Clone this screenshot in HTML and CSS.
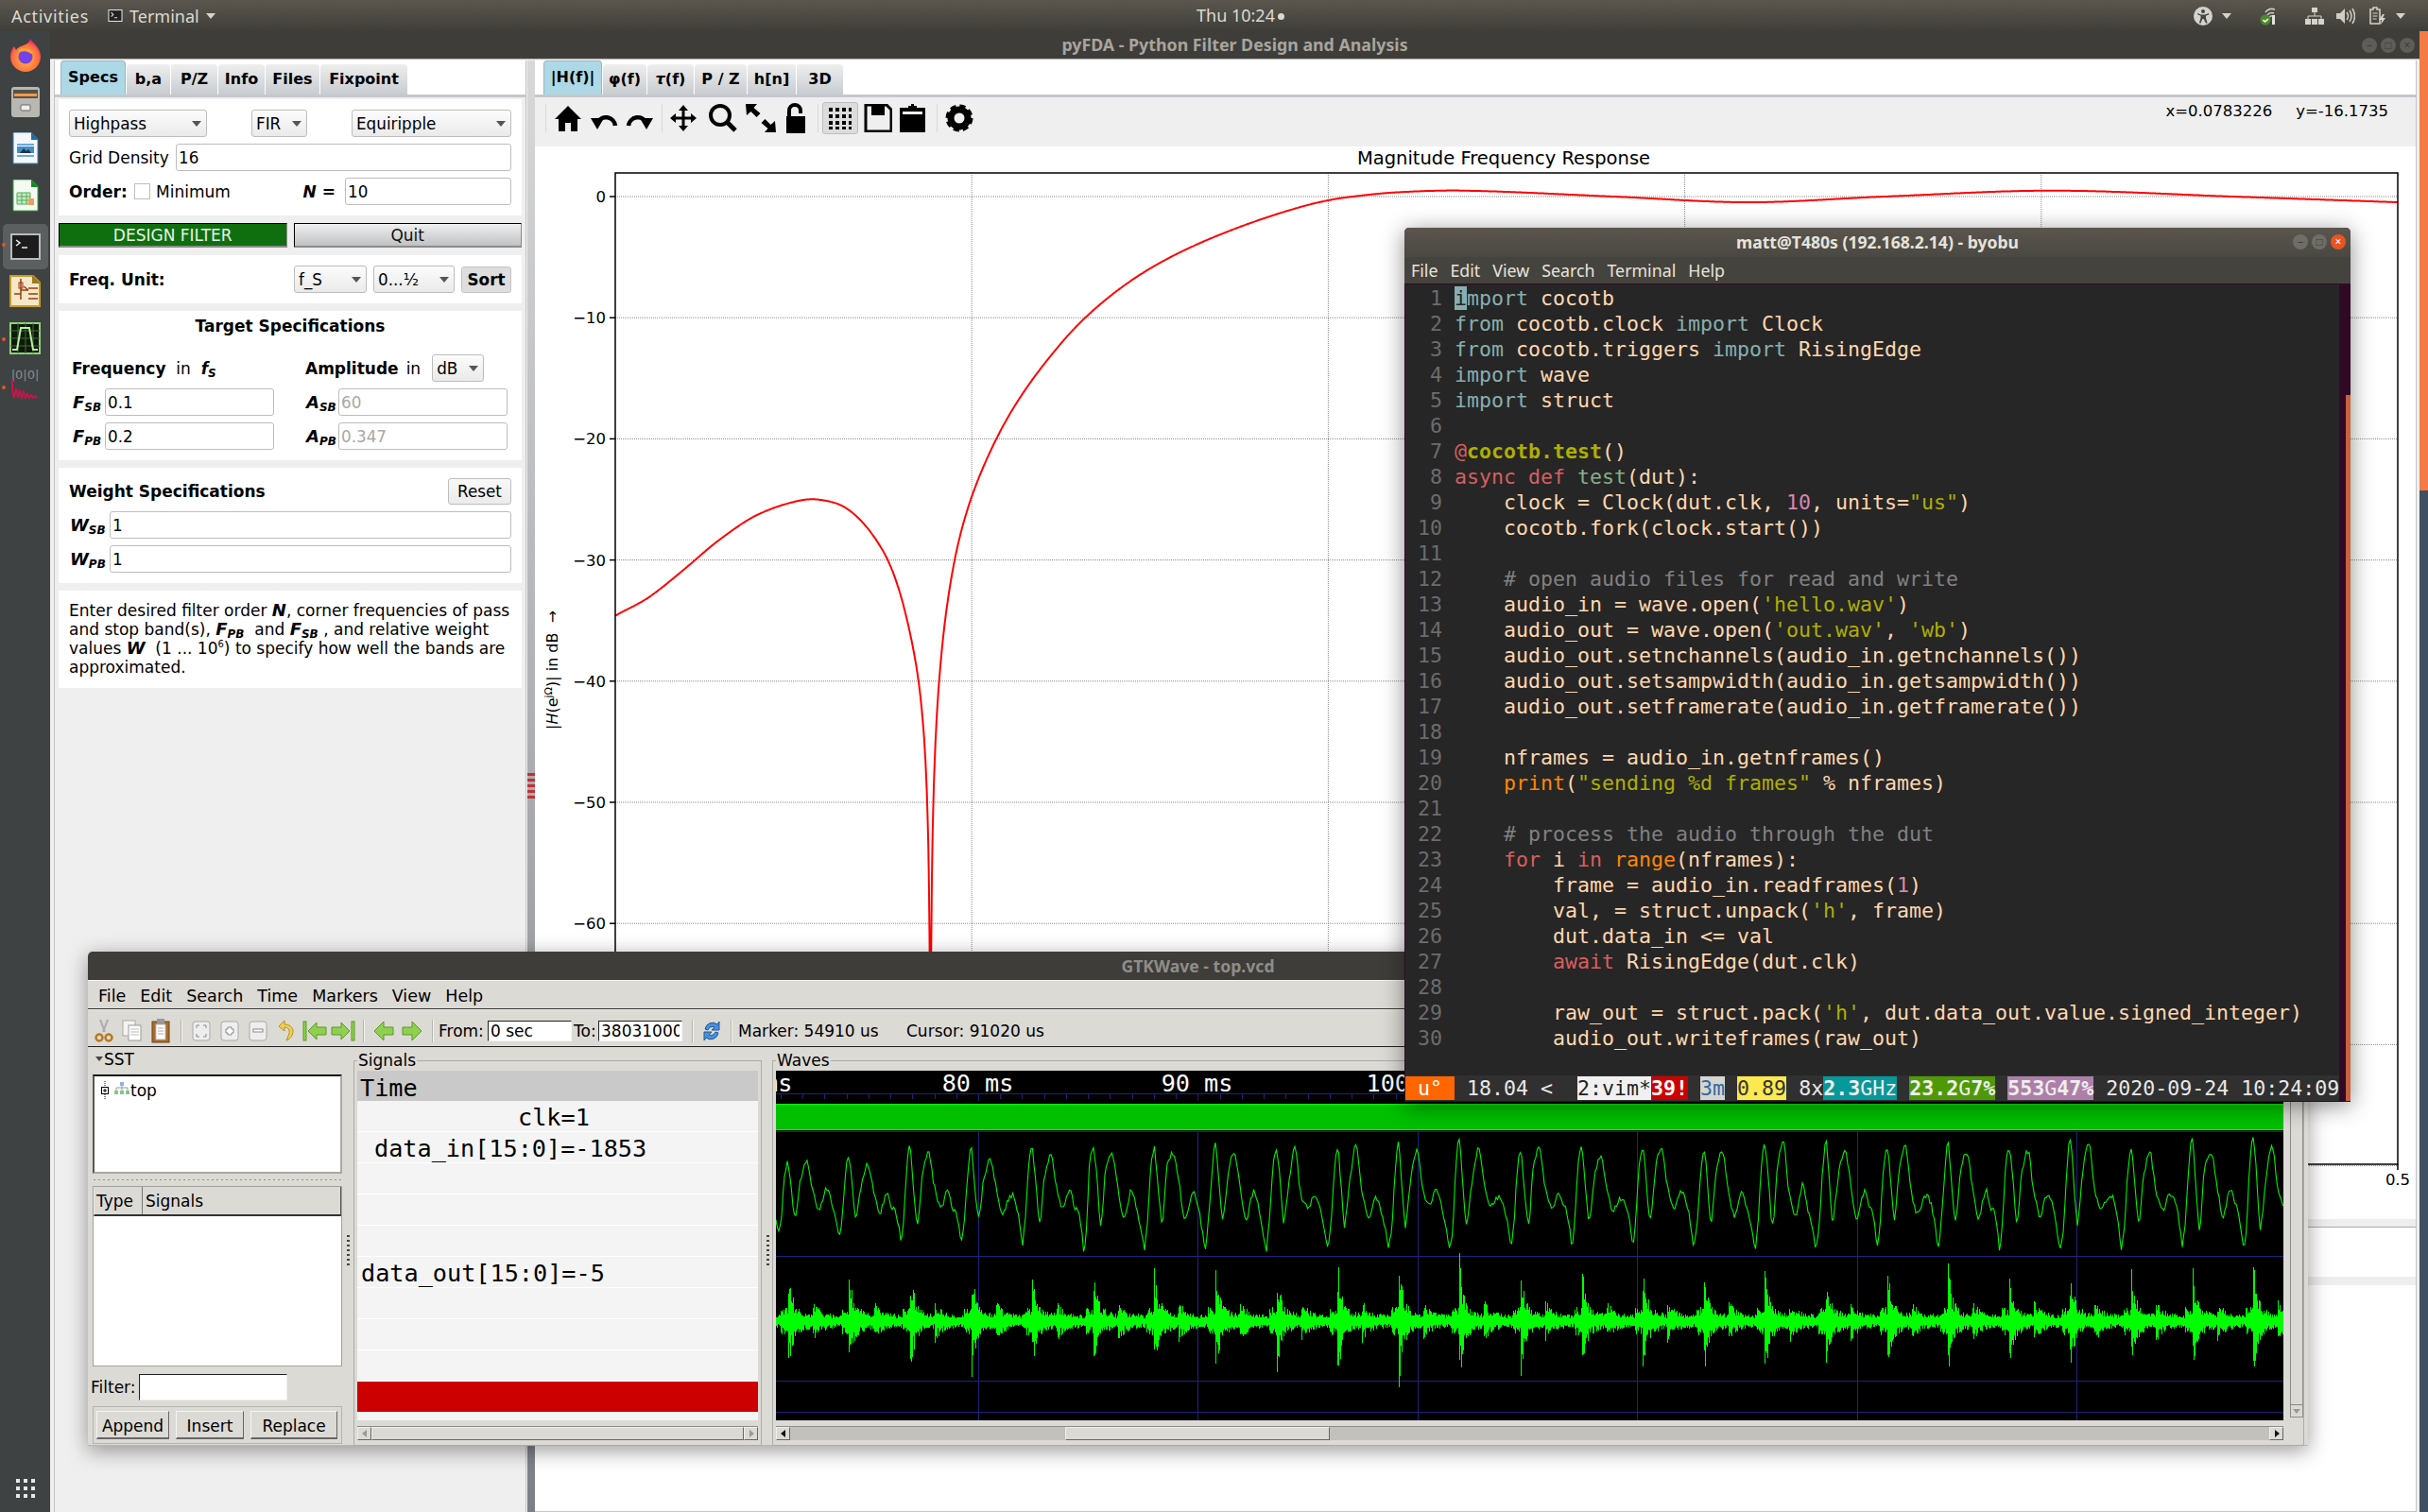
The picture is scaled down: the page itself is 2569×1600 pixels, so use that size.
FILE: index.html
```html
<!DOCTYPE html>
<html lang="en">
<head>
  <meta charset="UTF-8">
  <title>pyFDA desktop</title>
  <link rel="stylesheet" href="styles.css">
</head>
<body>
<div class="screen">
  <header class="topbar">
    <span class="tb-item tb-act">Activities</span>
    <span class="tb-item tb-app">
      <svg width="16" height="13" viewBox="0 0 14 12"><rect x="0.5" y="0.5" width="13" height="11" fill="#222" stroke="#ddd"/><path d="M3 3l2 2-2 2M6 8h3" stroke="#ddd" fill="none"/></svg>
      Terminal <i class="caret caret-light"></i>
    </span>
    <span class="tb-clock">Thu 10:24<b class="tb-dot"></b></span>
    <div class="tb-tray">
      <svg class="tray-a11y" width="20" height="20" viewBox="0 0 20 20"><circle cx="10" cy="10" r="10" fill="#d6d3cc"/><circle cx="10" cy="5" r="2" fill="#444"/><path d="M4 7l4 1.5h4L16 7l.4 1.3-3.4 1.5v2.4l1.6 5-1.4.5L10.6 13h-1.2l-2.1 4.7-1.4-.5 1.6-5V9.800L4.100 8.300z" fill="#444"/></svg>
      <i class="caret caret-light tray-c1"></i>
      <svg class="tray-wifi" width="18" height="20" viewBox="0 0 18 20"><path d="M6 6a9 9 0 0 1 10-3M8 9a6 6 0 0 1 7-2M10 12a3 3 0 0 1 4-2" stroke="#cfccc4" stroke-width="1.600" fill="none"/><rect x="13" y="9" width="3" height="10" fill="#e4e2dc"/><circle cx="6" cy="14" r="5.500" fill="#4e8a2c"/><path d="M3.500 14l2 2 3.500-3" stroke="#fff" stroke-width="1.500" fill="none"/></svg>
      <svg class="tray-net" width="20" height="18" viewBox="0 0 20 18"><path d="M7 0h6v5H7zM0 12h6v6H0zM7 12h6v6H7zM14 12h6v6h-6z" fill="#d6d3cc"/><path d="M10 5v4M3 12V9h14v3" stroke="#d6d3cc" fill="none"/></svg>
      <svg class="tray-vol" width="20" height="18" viewBox="0 0 20 18"><path d="M0 6h4l5-5v16l-5-5H0z" fill="#cfccc4"/><path d="M11 5q3 4 0 8M14 3q4 6 0 12M17 1q5 8 0 16" stroke="#cfccc4" stroke-width="1.500" fill="none"/></svg>
      <svg class="tray-bat" width="18" height="20" viewBox="0 0 18 20"><path d="M1 3h3V1h4v2h3v15H1z" fill="none" stroke="#d6d3cc" stroke-width="1.500"/><path d="M3.500 7h5M3.500 10h5M3.500 13h4" stroke="#d6d3cc"/><path d="M14 8l-4 6h3l-1 5 5-7h-3l2-4z" fill="#d6d3cc"/></svg>
      <i class="caret caret-light tray-c2"></i>
    </div>
  </header>

  <div class="main">
    <nav class="dock">
      <svg class="dock-icon" width="34" height="36" viewBox="0 0 34 36"><defs><radialGradient id="fx" cx="50%" cy="60%" r="60%"><stop offset="0" stop-color="#ffbd4f"/><stop offset="0.7" stop-color="#ff7139"/><stop offset="1" stop-color="#e31587"/></radialGradient></defs><path d="M22 1c3 5 11 9 11 19a16 16 0 0 1-32 0c0-5 2-9 4-11l2 4c2-3 5-4 8-5 3-1 6-3 7-7z" fill="url(#fx)"/><circle cx="17" cy="20" r="7.500" fill="#7542e5"/><path d="M10 14c4-2 10-2 14 2" stroke="#ffa436" stroke-width="3" fill="none"/></svg>
      <svg class="dock-icon" width="30" height="32" viewBox="0 0 30 32"><rect width="30" height="32" rx="3" fill="#b9b7b2"/><rect x="2" y="3" width="26" height="9" fill="#5a5047"/><rect x="3" y="7" width="24" height="3" fill="#ef9a4c"/><rect x="10" y="19" width="10" height="6" rx="1" fill="#eee" stroke="#666"/></svg>
      <svg class="dock-icon" width="28" height="34" viewBox="0 0 28 34"><path d="M1 0h19l7 7v26H1z" fill="#f4f7fb" stroke="#3d7cb0"/><path d="M20 0l8 8h-8z" fill="#1e6aa8"/><rect x="5" y="12" width="18" height="2" fill="#6fa8d8"/><rect x="5" y="15" width="18" height="7" fill="#3f8fca"/><path d="M8 22l4-5 3 3 2-2 3 4z" fill="#234"/><rect x="5" y="24" width="18" height="2" fill="#6fa8d8"/></svg>
      <svg class="dock-icon" width="28" height="34" viewBox="0 0 28 34"><path d="M1 0h19l7 7v26H1z" fill="#f4fbf2" stroke="#43a047"/><path d="M20 0l8 8h-8z" fill="#188a2a"/><path d="M5 14h14v12H5z" fill="#cfe8c8" stroke="#4caf50"/><path d="M5 18h14M5 22h14M10 14v12M15 14v12" stroke="#4caf50"/><rect x="17" y="20" width="6" height="7" fill="#e9a15a"/></svg>
      <div class="dock-active"><svg width="32" height="28" viewBox="0 0 32 28"><rect x="1" y="1" width="30" height="26" fill="#1c1c1c" stroke="#bbb" stroke-width="2"/><path d="M6 7l4 3-4 3M12 15h6" stroke="#eee" stroke-width="1.500" fill="none"/></svg></div>
      <svg class="dock-icon" width="33" height="34" viewBox="0 0 33 34"><path d="M1 1h24l7 7v25H1z" fill="#f4e8c8" stroke="#c79a2a" stroke-width="2"/><path d="M24 0l9 9h-9z" fill="#9c7a20"/><path d="M12 4v22M12 16h8M20 16l-5-4M5 20h7M20 14h10M20 20h10M20 25h10" stroke="#9b3c10" stroke-width="1.500" fill="none"/><rect x="10" y="8" width="4" height="6" fill="none" stroke="#9b3c10"/></svg>
      <svg class="dock-icon" width="33" height="34" viewBox="0 0 33 34"><rect x="1" y="1" width="31" height="32" fill="#10180c" stroke="#8cd37a" stroke-width="2"/><path d="M1 9h31M1 17h31M1 25h31M9 1v32M17 1v32M25 1v32" stroke="#3e6e30"/><path d="M3 29h5l4-23h9l4 23h5" stroke="#b6f0a0" stroke-width="2" fill="none"/></svg>
      <div class="dock-pyfda">
        <span class="pyfda-txt">|0|0|</span>
        <svg width="32" height="22" viewBox="0 0 32 22"><path d="M2 0v12l2 8 2-10 2 10 2-8 2 8 2-6 2 6 2-4 2 4 2-3 2 3 2-2 2 2" stroke="#c2164e" stroke-width="2" fill="none"/></svg>
      </div>
      <div class="dock-grid"><i></i><i></i><i></i><i></i><i></i><i></i><i></i><i></i><i></i></div>
      <i class="dock-dot dot-term"></i><i class="dock-dot dot-scope"></i><i class="dock-dot dot-fda"></i>
    </nav>

    <section class="fda-window">
      <div class="fda-title">
        <span class="fda-title-txt">pyFDA - Python Filter Design and Analysis</span>
        <div class="wm-btns"><i>&#8211;</i><i>&#9633;</i><i>&#215;</i></div>
      </div>
      <div class="fda-body">
        <aside class="side">
          <div class="tabs side-tabs">
            <span class="tab on tab-specs">Specs</span><span class="tab tab-ba">b,a</span><span class="tab tab-pz">P/Z</span><span class="tab tab-info">Info</span><span class="tab tab-files">Files</span><span class="tab tab-fix">Fixpoint</span>
          </div>
          <div class="cards">
            <div class="card card-type">
              <div class="row row-between">
                <div class="sel w-146"><span>Highpass</span><i class="caret"></i></div>
                <div class="sel w-59"><span>FIR</span><i class="caret"></i></div>
                <div class="sel w-169"><span>Equiripple</span><i class="caret"></i></div>
              </div>
              <div class="row"><label class="lbl-grid">Grid Density</label><input class="inp grow" value="16"></div>
              <div class="row">
                <b class="lbl-order">Order:</b><i class="chk"></i><span>Minimum</span>
                <b class="lbl-n"><i>N</i> =</b><input class="inp inp-n" value="10">
              </div>
            </div>
            <div class="btn-row">
              <button class="big-btn design">DESIGN FILTER</button>
              <button class="big-btn quit">Quit</button>
            </div>
            <div class="card card-unit">
              <div class="row">
                <b>Freq. Unit:</b>
                <div class="sel w-77 push"><span>f_S</span><i class="caret"></i></div>
                <div class="sel w-86"><span>0...½</span><i class="caret"></i></div>
                <button class="sort">Sort</button>
              </div>
            </div>
            <div class="card card-target">
              <h3 class="target-h">Target Specifications</h3>
              <div class="target-grid">
                <div class="target-head"><b>Frequency</b>&nbsp; in&nbsp; <b><i>f<sub>S</sub></i></b></div>
                <div class="target-head"><b>Amplitude</b><span class="in-word">in</span> <div class="sel w-55"><span>dB</span><i class="caret"></i></div></div>
                <div class="pair"><b class="sym"><i>F<sub>SB</sub></i></b><input class="inp grow" value="0.1"></div>
                <div class="pair"><b class="sym"><i>A<sub>SB</sub></i></b><input class="inp grow dim" value="60"></div>
                <div class="pair"><b class="sym"><i>F<sub>PB</sub></i></b><input class="inp grow" value="0.2"></div>
                <div class="pair"><b class="sym"><i>A<sub>PB</sub></i></b><input class="inp grow dim" value="0.347"></div>
              </div>
            </div>
            <div class="card card-weight">
              <div class="row weight-head"><b>Weight Specifications</b><button class="reset push">Reset</button></div>
              <div class="row"><b class="sym sym-w"><i>W<sub>SB</sub></i></b><input class="inp grow" value="1"></div>
              <div class="row"><b class="sym sym-w"><i>W<sub>PB</sub></i></b><input class="inp grow" value="1"></div>
            </div>
            <div class="card card-info">
              <p class="info-txt">Enter desired filter order <b><i>N</i></b>, corner frequencies of pass<br>and stop band(s), <b><i>F<sub>PB</sub></i></b>&nbsp; and <b><i>F<sub>SB</sub></i></b> , and relative weight<br>values <b><i>W</i></b>&nbsp; (1 ... 10<sup>6</sup>) to specify how well the bands are<br>approximated.</p>
            </div>
          </div>
        </aside>
        <div class="split"><i class="split-dots"></i></div>
        <div class="plot-pane">
          <div class="tabs plot-tabs">
            <span class="tab on tab-h">|H(f)|</span><span class="tab tab-phi">φ(f)</span><span class="tab tab-tau"><i>τ</i>(f)</span><span class="tab tab-p">P / Z</span><span class="tab tab-hn">h[n]</span><span class="tab tab-3d">3D</span>
          </div>
          <div class="mpl-bar">
            <i class="mpl-sep"></i>
            <svg class="mpl mpl-home" width="30" height="30" viewBox="0 0 30 30"><path d="M15 2L29 16h-4v13h-7v-9h-6v9H5V16H1z"/></svg>
            <svg class="mpl" width="30" height="30" viewBox="0 0 30 30"><path d="M8 20a10 10 0 0 1 19 3" fill="none" stroke="#000" stroke-width="4.500"/><path d="M1 15h14l-7 12z"/></svg>
            <svg class="mpl" width="30" height="30" viewBox="0 0 30 30"><path d="M22 20a10 10 0 0 0-19 3" fill="none" stroke="#000" stroke-width="4.500"/><path d="M29 15H15l7 12z"/></svg>
            <i class="mpl-sep"></i>
            <svg class="mpl mpl-move" width="28" height="30" viewBox="0 0 28 30"><path d="M14 1l5 6h-3.500v6.500H22V10l6 5-6 5v-3.500h-6.500V23H19l-5 6-5-6h3.500v-6.500H6V20l-6-5 6-5v3.500h6.500V7H9z"/></svg>
            <svg class="mpl" width="32" height="32" viewBox="0 0 32 32"><circle cx="13" cy="13" r="10" fill="none" stroke="#000" stroke-width="4"/><path d="M20 20l9 9" stroke="#000" stroke-width="5"/></svg>
            <svg class="mpl" width="32" height="30" viewBox="0 0 32 30"><path d="M0 0h12l-3.500 4 7 6-4 4-6-6L1 12zM32 30H20l3.500-4-7-6 4-4 6 6 4.500-4z"/></svg>
            <svg class="mpl" width="26" height="32" viewBox="0 0 26 32"><path d="M6 15V8a6 6 0 0 1 12 0v3" fill="none" stroke="#000" stroke-width="4"/><rect x="3" y="14" width="20" height="18"/></svg>
            <i class="mpl-sep mpl-sep-b"></i>
            <span class="mpl-check"><svg width="28" height="26" viewBox="0 0 28 26"><path d="M2 2h4v4H2zM9 2h4v4H9zM16 2h4v4h-4zM23 2h3v4h-3zM2 9h4v4H2zM9 9h4v4H9zM16 9h4v4h-4zM23 9h3v4h-3zM2 16h4v4H2zM9 16h4v4H9zM16 16h4v4h-4zM23 16h3v4h-3zM2 22h4v3H2zM9 22h4v3H9zM16 22h4v3h-4zM23 22h3v3h-3z"/></svg></span>
            <svg class="mpl mpl-save" width="30" height="30" viewBox="0 0 30 30"><path d="M2 1h22l5 5v23H2z" fill="none" stroke="#000" stroke-width="3"/><path d="M8 1h14v11H8z"/></svg>
            <svg class="mpl" width="27" height="30" viewBox="0 0 27 30"><path d="M0 4h9V2h3V0h3v2h3v2h9v26H0z"/><path d="M3 8h21v3H3z" fill="#efefef"/></svg>
            <i class="mpl-sep mpl-sep-c"></i>
            <svg class="mpl mpl-gear" width="30" height="30" viewBox="0 0 30 30"><circle cx="15" cy="15" r="9" fill="none" stroke="#000" stroke-width="7"/><circle cx="15" cy="15" r="12.500" fill="none" stroke="#000" stroke-width="4" stroke-dasharray="6 3.820"/></svg>
            <span class="mpl-coord"><span>x=0.0783226</span><span>y=-16.1735</span></span>
          </div>
          <svg class="plot" width="1991" height="1135" viewBox="566 155 1991 1135">
            <text class="plot-title" x="1591" y="174" text-anchor="middle">Magnitude Frequency Response</text>
            <g id="gridlines"></g>
            <path id="curve" class="curve"></path>
            <rect class="frame" x="651" y="183" width="1886" height="1049"></rect>
            <text class="ylabel" transform="translate(590 772) rotate(-90)"><tspan>|</tspan><tspan font-style="italic">H</tspan><tspan>(e</tspan><tspan class="ssup" dy="-6">jΩ</tspan><tspan dy="6">)| in dB&#160; →</tspan></text>
            <text class="tick-x" x="2537" y="1254" text-anchor="middle">0.5</text>
            <path class="frame-tick" d="M2537 1232v6"></path>
          </svg>
          <div class="plot-band"></div>
          <div class="plot-gap"></div>
          <div class="plot-band2"></div>
          <div class="plot-end"></div>
        </div>
      </div>
    </section>
    <div class="wallpaper"></div>
  </div>

  <!-- GTKWave -->
  <section class="gtk">
    <div class="gtk-title">GTKWave - top.vcd</div>
    <div class="gtk-menu"><span>File</span><span>Edit</span><span>Search</span><span>Time</span><span>Markers</span><span>View</span><span>Help</span></div>
    <div class="gtk-tools">
      <svg class="gi" width="20" height="24" viewBox="0 0 20 24"><path d="M6 0l5 13M14 0L9 13" stroke="#aaa" stroke-width="2" fill="none"/><circle cx="5" cy="19" r="3.500" fill="none" stroke="#b8791a" stroke-width="2.500"/><circle cx="15" cy="19" r="3.500" fill="none" stroke="#b8791a" stroke-width="2.500"/></svg>
      <svg class="gi" width="22" height="24" viewBox="0 0 22 24"><rect x="1" y="1" width="13" height="16" fill="#f4f4f4" stroke="#aaa"/><rect x="7" y="6" width="13" height="16" fill="#fff" stroke="#999"/><path d="M9 10h9M9 13h9M9 16h9" stroke="#bbb"/></svg>
      <svg class="gi" width="20" height="26" viewBox="0 0 20 26"><rect x="1" y="3" width="18" height="22" fill="#a86c2a" stroke="#6e4518"/><rect x="5" y="6" width="10" height="16" fill="#fff" stroke="#bbb"/><rect x="6" y="0" width="8" height="5" fill="#999"/><path d="M7 10h6M7 13h6M7 16h6" stroke="#aaa"/></svg>
      <i class="gsep"></i>
      <svg class="gi" width="20" height="24" viewBox="0 0 20 24"><rect x="1" y="2" width="18" height="20" rx="3" fill="#eee" stroke="#aaa"/><path d="M5 9V6h3M12 6h3v3M15 15v3h-3M8 18H5v-3" stroke="#888" fill="none"/></svg>
      <svg class="gi" width="20" height="24" viewBox="0 0 20 24"><rect x="1" y="2" width="18" height="20" rx="3" fill="#eee" stroke="#aaa"/><path d="M8 8h4v2h2v4h-2v2H8v-2H6v-4h2z" fill="#fff" stroke="#888"/></svg>
      <svg class="gi" width="20" height="24" viewBox="0 0 20 24"><rect x="1" y="2" width="18" height="20" rx="3" fill="#eee" stroke="#aaa"/><rect x="5" y="10" width="10" height="3" fill="#fff" stroke="#888"/></svg>
      <svg class="gi" width="18" height="26" viewBox="0 0 18 26"><path d="M7 2L1 8l6 5V9c4 0 6 3 5 7l-3 7c5-2 7-6 7-10 0-4-4-7-9-7z" fill="#f0d050" stroke="#b09020"/></svg>
      <svg class="gi" width="26" height="24" viewBox="0 0 26 24"><rect x="1" y="2" width="3" height="20" fill="#8fd050" stroke="#5a9a20"/><path d="M6 12l9-9v5h10v8H15v5z" fill="#8fd050" stroke="#5a9a20"/></svg>
      <svg class="gi" width="26" height="24" viewBox="0 0 26 24"><rect x="22" y="2" width="3" height="20" fill="#8fd050" stroke="#5a9a20"/><path d="M20 12l-9-9v5H1v8h10v5z" fill="#8fd050" stroke="#5a9a20"/></svg>
      <i class="gsep"></i>
      <svg class="gi" width="22" height="24" viewBox="0 0 22 24"><path d="M1 12l10-10v6h10v8H11v6z" fill="#8fd050" stroke="#5a9a20"/></svg>
      <svg class="gi" width="22" height="24" viewBox="0 0 22 24"><path d="M21 12L11 2v6H1v8h10v6z" fill="#8fd050" stroke="#5a9a20"/></svg>
      <i class="gsep"></i>
      <span class="gt-lbl from">From:</span><input class="gt-inp" value="0 sec">
      <span class="gt-lbl to">To:</span><input class="gt-inp" value="3803100000">
      <i class="gsep gsep-a"></i>
      <svg class="gi-re" width="20" height="28" viewBox="0 0 20 28"><path d="M3 12a8 8 0 0 1 13-5l2-3v9h-8l3-3a5 5 0 0 0-7 3z" fill="#4a90d9" stroke="#1f5a9e"/><path d="M17 16a8 8 0 0 1-13 5l-2 3v-9h8l-3 3a5 5 0 0 0 7-3z" fill="#4a90d9" stroke="#1f5a9e"/></svg>
      <i class="gsep gsep-a"></i>
      <span class="gt-lbl marker">Marker: 54910 us</span>
      <span class="gt-lbl cursor">Cursor: 91020 us</span>
    </div>
    <div class="gtk-panes">
      <div class="sst">
        <div class="sst-head"><i class="tri-down"></i>SST</div>
        <div class="tree-box">
          <svg width="20" height="20" viewBox="0 0 20 20" class="tree-exp"><path d="M7 0v6M7 14v6" stroke="#000" stroke-dasharray="1 1"/><rect x="3.500" y="6.500" width="7" height="7" fill="#fff" stroke="#000"/><path d="M5 10h4M7 8v4" stroke="#000"/></svg>
          <svg class="tree-node" width="16" height="14" viewBox="0 0 16 14"><rect x="6" y="0" width="4" height="4" fill="#8db4e0"/><path d="M2 9V6h12v3M8 4v5" stroke="#999" fill="none"/><rect x="0" y="9" width="4" height="4" fill="#84c784"/><rect x="6" y="9" width="4" height="4" fill="#84c784"/><rect x="12" y="9" width="4" height="4" fill="#84c784"/></svg>
          <span>top</span>
        </div>
        <div class="h-handle"></div>
        <div class="list-box">
          <div class="list-head"><span class="lh-type">Type</span><span class="lh-sig">Signals</span></div>
        </div>
        <div class="filter-row"><span>Filter:</span><input class="filter-inp"></div>
        <div class="btn-frame"><button class="gbtn g-append">Append</button><button class="gbtn g-insert">Insert</button><button class="gbtn g-replace">Replace</button></div>
      </div>
      <i class="v-handle v-handle-a"></i>
      <div class="gframe signals">
        <span class="gframe-lbl">Signals</span>
        <div class="sig-list">
          <div class="sig-time">Time</div>
          <div class="sig-row sig-clk">clk=1</div>
          <div class="sig-row sig-in">data_in[15:0]=-1853</div>
          <div class="sig-row"></div>
          <div class="sig-row"></div>
          <div class="sig-row"></div>
          <div class="sig-row sig-out">data_out[15:0]=-5</div>
          <div class="sig-row"></div>
          <div class="sig-row"></div>
          <div class="sig-row"></div>
          <div class="sig-red"></div>
        </div>
        <div class="hscroll hs-sig"><i class="hs-btn hs-l"></i><i class="hs-thumb hs-full"></i><i class="hs-btn hs-r"></i></div>
      </div>
      <i class="v-handle v-handle-b"></i>
      <div class="gframe waves">
        <span class="gframe-lbl">Waves</span>
        <div class="wave-row">
          <svg class="wave" width="1595" height="370" viewBox="821 1133 1595 370">
            <g class="ruler-txt">
              <text x="808" y="1155">ms</text>
              <text x="1027" y="1155" text-anchor="end">80</text><text x="1042" y="1155">ms</text>
              <text x="1259" y="1155" text-anchor="end">90</text><text x="1274" y="1155">ms</text>
              <text x="1491" y="1155" text-anchor="end">100</text>
            </g>
            <g id="wave-grid"></g>
            <rect class="clk-band" x="821" y="1168" width="1595" height="28"></rect>
            <path class="clk-edge" d="M821 1168.500H2416M821 1195.500H2416"></path>
            <path id="wave-out" class="wave-line wave-fill"></path>
            <path id="wave-in" class="wave-line"></path>
          </svg>
          <div class="vscroll"><i class="vs-btn"></i></div>
        </div>
        <div class="hscroll hs-wave"><i class="hs-btn hs-l hs-dark"></i><span class="hs-lead"></span><i class="hs-thumb hs-wave-thumb"></i><span class="hs-tail"></span><i class="hs-btn hs-r hs-dark"></i></div>
      </div>
    </div>
  </section>

  <!-- byobu terminal -->
  <section class="term">
    <div class="term-title">
      <span>matt@T480s (192.168.2.14) - byobu</span>
      <div class="term-btns"><i>&#8211;</i><i>&#9633;</i><i class="close">&#215;</i></div>
    </div>
    <div class="term-menu"><span>File</span><span>Edit</span><span>View</span><span>Search</span><span>Terminal</span><span>Help</span></div>
    <div class="term-body">
      <div class="vim">
        <div class="ln"><span class="nr">  1 </span><span class="cur">i</span><span class="kw">mport</span> cocotb</div>
        <div class="ln"><span class="nr">  2 </span><span class="kw">from</span> cocotb.clock <span class="kw">import</span> Clock</div>
        <div class="ln"><span class="nr">  3 </span><span class="kw">from</span> cocotb.triggers <span class="kw">import</span> RisingEdge</div>
        <div class="ln"><span class="nr">  4 </span><span class="kw">import</span> wave</div>
        <div class="ln"><span class="nr">  5 </span><span class="kw">import</span> struct</div>
        <div class="ln"><span class="nr">  6 </span></div>
        <div class="ln"><span class="nr">  7 </span><span class="red">@</span><span class="deco">cocotb.test</span>()</div>
        <div class="ln"><span class="nr">  8 </span><span class="red">async def</span> <span class="fn">test</span>(dut):</div>
        <div class="ln"><span class="nr">  9 </span>    clock = Clock(dut.clk, <span class="num">10</span>, units=<span class="str">"us"</span>)</div>
        <div class="ln"><span class="nr"> 10 </span>    cocotb.fork(clock.start())</div>
        <div class="ln"><span class="nr"> 11 </span></div>
        <div class="ln"><span class="nr"> 12 </span>    <span class="cmt"># open audio files for read and write</span></div>
        <div class="ln"><span class="nr"> 13 </span>    audio_in = wave.open(<span class="str">'hello.wav'</span>)</div>
        <div class="ln"><span class="nr"> 14 </span>    audio_out = wave.open(<span class="str">'out.wav'</span>, <span class="str">'wb'</span>)</div>
        <div class="ln"><span class="nr"> 15 </span>    audio_out.setnchannels(audio_in.getnchannels())</div>
        <div class="ln"><span class="nr"> 16 </span>    audio_out.setsampwidth(audio_in.getsampwidth())</div>
        <div class="ln"><span class="nr"> 17 </span>    audio_out.setframerate(audio_in.getframerate())</div>
        <div class="ln"><span class="nr"> 18 </span></div>
        <div class="ln"><span class="nr"> 19 </span>    nframes = audio_in.getnframes()</div>
        <div class="ln"><span class="nr"> 20 </span>    <span class="bi">print</span>(<span class="str">"sending %d frames"</span> % nframes)</div>
        <div class="ln"><span class="nr"> 21 </span></div>
        <div class="ln"><span class="nr"> 22 </span>    <span class="cmt"># process the audio through the dut</span></div>
        <div class="ln"><span class="nr"> 23 </span>    <span class="red">for</span> i <span class="red">in</span> <span class="bi">range</span>(nframes):</div>
        <div class="ln"><span class="nr"> 24 </span>        frame = audio_in.readframes(<span class="num">1</span>)</div>
        <div class="ln"><span class="nr"> 25 </span>        val, = struct.unpack(<span class="str">'h'</span>, frame)</div>
        <div class="ln"><span class="nr"> 26 </span>        dut.data_in &lt;= val</div>
        <div class="ln"><span class="nr"> 27 </span>        <span class="red">await</span> RisingEdge(dut.clk)</div>
        <div class="ln"><span class="nr"> 28 </span></div>
        <div class="ln"><span class="nr"> 29 </span>        raw_out = struct.pack(<span class="str">'h'</span>, dut.data_out.value.signed_integer)</div>
        <div class="ln"><span class="nr"> 30 </span>        audio_out.writeframes(raw_out)</div>
      </div>
      <div class="status"><span class="st-u"> u° </span> 18.04 &lt;  <span class="st-win">2:vim*</span><span class="st-err">39!</span> <span class="st-up">3m</span> <span class="st-load">0.89</span> 8x<span class="st-cpu"><b>2.3</b>GHz</span> <span class="st-mem"><b>23.2</b>G<b>7%</b></span> <span class="st-disk"><b>553</b>G<b>47%</b></span> 2020-09-24 10:24:09</div>
    </div>
    <div class="term-scroll"><i></i></div>
  </section>
</div>
<script src="script.js"></script>
</body>
</html>
```

FILE: styles.css
```css
* {
  box-sizing: border-box;
}
body {
  margin: 0;
  font-family: "DejaVu Sans", sans-serif;
  font-size: 17px;
  color: #000;
}
.screen {
  position: relative;
  width: 2569px;
  height: 1600px;
  overflow: hidden;
  display: flex;
  flex-direction: column;
  background: #3f3e39;
}

/* top bar */
.topbar {
  position: relative;
  height: 33px;
  flex: none;
  background: linear-gradient(#5b574f, #3f3e39);
  color: #dcd9d1;
  font-family: "Noto Sans", sans-serif;
  font-size: 18px;
  display: flex;
  align-items: center;
  padding-left: 12px;
}
.tb-act {
  letter-spacing: 0.7px;
}
.tb-app {
  margin-left: 20px;
  display: flex;
  align-items: center;
  gap: 7px;
}
.tb-clock {
  position: absolute;
  left: 1266px;
  top: 4px;
}
.tb-dot {
  display: inline-block;
  width: 7px;
  height: 7px;
  margin-left: 3px;
  border-radius: 50%;
  background: #dcd9d1;
  vertical-align: 2px;
}
.tb-tray {
  margin-left: auto;
  margin-right: 24px;
  display: flex;
  align-items: center;
}
.tray-c1 { margin: 0 30px 0 10px; }
.tray-wifi { margin-right: 30px; }
.tray-net { margin-right: 13px; }
.tray-vol { margin-right: 15px; }
.tray-c2 { margin-left: 10px; }
.caret {
  display: inline-block;
  width: 0;
  height: 0;
  border: 5px solid transparent;
  border-top: 6px solid #555;
  border-bottom: 0;
}
.caret-light {
  border-top-color: #d6d3cc;
}

.main {
  flex: 1;
  display: flex;
  min-height: 0;
}

/* dock */
.dock {
  position: relative;
  width: 53px;
  flex: none;
  background: #3e4242;
  display: flex;
  flex-direction: column;
  align-items: center;
  padding-top: 7px;
}
.dock-icon {
  flex: none;
  margin-bottom: 16px;
}
.dock-active {
  width: 48px;
  height: 48px;
  background: #5b5f5f;
  border-radius: 5px;
  display: flex;
  align-items: center;
  justify-content: center;
  margin: -3px 0 6px;
}
.dock-pyfda {
  width: 36px;
  line-height: 12px;
  text-align: center;
}
.pyfda-txt {
  display: block;
  color: #8a8d8d;
  font-size: 13px;
  line-height: 12px;
  height: 12px;
}
.dock-pyfda svg {
  margin-top: -2px;
}
.dock-grid {
  position: absolute;
  left: 17px;
  bottom: 15px;
  width: 20px;
  display: grid;
  grid-template-columns: repeat(3, 4px);
  gap: 4px;
}
.dock-grid i {
  width: 4px;
  height: 4px;
  background: #e8e8e8;
}
.dock-dot {
  position: absolute;
  left: 2px;
  width: 4px;
  height: 4px;
  border-radius: 50%;
  background: #e95420;
}
.dot-term { top: 224px; }
.dot-scope { top: 324px; }
.dot-fda { top: 375px; }

/* pyFDA window */
.fda-window {
  width: 2507px;
  flex: none;
  display: flex;
  flex-direction: column;
  background: #efefef;
}
.fda-title {
  position: relative;
  height: 29px;
  flex: none;
  background: #3e3d39;
  color: #a8a59d;
  font-family: "Noto Sans", sans-serif;
  font-weight: 700;
  font-size: 17.800px;
  text-align: center;
  line-height: 29px;
}
.wm-btns {
  position: absolute;
  right: 5px;
  top: 7px;
  display: flex;
  gap: 4px;
}
.wm-btns i {
  width: 16px;
  height: 16px;
  border-radius: 50%;
  background: #5e5d58;
  color: #3e3d39;
  font-size: 12px;
  line-height: 16px;
  text-align: center;
  font-weight: 400;
  font-style: normal;
}
.fda-body {
  flex: 1;
  display: flex;
  min-height: 0;
  padding: 1px 3px 0 4px;
  border-top: 1px solid #bbb;
}
.side {
  width: 500px;
  flex: none;
  border-left: 1px solid #c4c4c4;
  border-right: 1px solid #c4c4c4;
  background: #efefef;
}
.tabs {
  display: flex;
  align-items: flex-end;
  background: #fff;
  border-bottom: 3px solid #c5c9cc;
}
.side-tabs {
  height: 39px;
  padding-left: 6px;
}
.tab {
  height: 32px;
  flex: none;
  background: linear-gradient(#eeeeee, #c8ccd0);
  border-radius: 4px 4px 0 0;
  font-weight: 700;
  font-size: 16px;
  line-height: 32px;
  text-align: center;
  margin-right: 1px;
}
.tab.on {
  height: 36px;
  background: #add8e6;
  line-height: 33px;
  border: 1px solid #a0b4bc;
  border-bottom: 0;
}
.tab-specs { width: 69px; }
.tab-ba { width: 46px; }
.tab-pz { width: 49px; }
.tab-info { width: 49px; }
.tab-files { width: 57px; }
.tab-fix { width: 92px; }
.cards {
  padding: 2px 4px 0;
}
.card {
  background: #fff;
  margin-bottom: 8px;
}
.row {
  display: flex;
  align-items: center;
  height: 29px;
}
.row-between {
  justify-content: space-between;
}
.card-type {
  height: 123px;
  padding: 11px 11px 0;
  display: flex;
  flex-direction: column;
  gap: 7px;
}
.sel {
  height: 29px;
  display: flex;
  align-items: center;
  justify-content: space-between;
  padding: 0 5px 0 4px;
  background: linear-gradient(#fcfcfc, #eaeaea);
  border: 1px solid #bdbdbd;
  border-radius: 3px;
  font-size: 16.800px;
  flex: none;
}
.w-146 { width: 146px; }
.w-59 { width: 59px; }
.w-169 { width: 169px; }
.w-77 { width: 77px; }
.w-86 { width: 86px; }
.w-55 { width: 55px; }
.inp {
  height: 29px;
  min-width: 0;
  font: 16.800px "DejaVu Sans", sans-serif;
  color: #000;
  padding: 0 2px;
  border: 1px solid #bdbdbd;
  border-radius: 3px;
  background: #fff;
  outline: 0;
}
.grow {
  flex: 1;
}
.dim {
  color: #a8a8a8;
}
.lbl-grid {
  width: 113px;
}
.lbl-order {
  width: 69px;
}
.chk {
  width: 17px;
  height: 17px;
  background: #fff;
  border: 1px solid #bdbdbd;
  margin-right: 6px;
}
.lbl-n {
  margin-left: auto;
  margin-right: 10px;
  font-size: 17px;
}
.inp-n {
  width: 176px;
}
.btn-row {
  display: flex;
  gap: 7px;
  margin-bottom: 8px;
  margin-top: 2px;
}
.big-btn {
  flex: 1;
  height: 26px;
  font: 17px "DejaVu Sans", sans-serif;
  border: 1px solid #8a8a8a;
  border-top-color: #000;
  border-left-color: #000;
  border-bottom-width: 2px;
  padding: 0;
}
.design {
  background: #0f6f0f;
  color: #e8f2e8;
}
.quit {
  background: linear-gradient(#f0f0f0, #bfc1c3);
  color: #111;
}
.card-unit {
  height: 51px;
  padding: 11px 11px 0;
}
.card-unit .row {
  gap: 7px;
}
.push {
  margin-left: auto;
}
.sort {
  width: 53px;
  height: 28px;
  padding: 0;
  font: 700 16.800px "DejaVu Sans", sans-serif;
  background: #dedede;
  border: 1px solid #c4c4c4;
  border-radius: 3px;
}
.card-target {
  height: 158px;
  padding: 4px 14px 0;
}
.target-h {
  margin: 0;
  font-size: 17px;
  line-height: 24px;
  text-align: center;
}
.target-grid {
  display: grid;
  grid-template-columns: 214px 214px;
  column-gap: 33px;
  row-gap: 7px;
  margin-top: 18px;
}
.target-head {
  display: flex;
  align-items: center;
  height: 29px;
  white-space: pre;
}
.in-word {
  margin-left: 8px;
}
.target-head .sel {
  margin-left: 12px;
}
sub {
  font-size: 12px;
  vertical-align: -3px;
  line-height: 0;
}
sup {
  font-size: 10px;
  line-height: 0;
  vertical-align: 7px;
}
.pair {
  display: flex;
  align-items: center;
  height: 29px;
}
.sym {
  font-size: 18px;
  width: 35px;
  flex: none;
  white-space: nowrap;
  padding-left: 1px;
}
.sym-w {
  width: 43px;
}
.card-weight {
  height: 122px;
  padding: 11px 11px 0;
  display: flex;
  flex-direction: column;
  gap: 7px;
}
.weight-head {
  height: 28px;
}
.reset {
  width: 67px;
  height: 28px;
  font: 16.800px "DejaVu Sans", sans-serif;
  background: linear-gradient(#f8f8f8, #ebebeb);
  border: 1px solid #bdbdbd;
  border-radius: 3px;
  padding: 0;
}
.card-info {
  height: 103px;
  padding: 11px 11px 0;
}
.info-txt {
  margin: 0;
  font-size: 17px;
  line-height: 20px;
  white-space: nowrap;
}
.info-txt b {
  font-size: 18px;
}
.split {
  position: relative;
  width: 9px;
  flex: none;
  background: linear-gradient(#d8d8d8, #7c7f88);
  border-left: 1px solid #efefef;
}
.split-dots {
  position: absolute;
  top: 754px;
  left: 0;
  width: 8px;
  height: 30px;
  background: repeating-linear-gradient(#c23030 0 3px, transparent 3px 6px);
}

/* plot side */
.plot-pane {
  flex: 1;
  min-width: 0;
  display: flex;
  flex-direction: column;
  background: #fff;
  border-right: 1px solid #c4c4c4;
}
.plot-tabs {
  height: 39px;
  padding-left: 9px;
  flex: none;
}
.tab-h { width: 62px; }
.tab-phi { width: 46px; }
.tab-tau { width: 49px; }
.tab-p { width: 55px; }
.tab-hn { width: 51px; }
.tab-3d { width: 49px; }
.mpl-bar {
  height: 52px;
  flex: none;
  background: #efefef;
  display: flex;
  align-items: center;
  padding: 0 0 8px 11px;
  position: relative;
}
.mpl-sep {
  width: 1px;
  height: 30px;
  background: #d8d8d8;
  flex: none;
  margin-right: 8px;
}
.mpl {
  flex: none;
  margin-right: 8px;
}
.mpl-move { margin-right: 12px; }
.mpl-sep-b { margin-left: 2px; margin-right: 4px; }
.mpl-sep-c { margin-left: 4px; margin-right: 8px; }
.mpl-check {
  width: 38px;
  height: 34px;
  display: flex;
  align-items: center;
  justify-content: center;
  background: #dcdcdc;
  border: 1px solid #bdbdbd;
  border-radius: 3px;
  margin-right: 6px;
}
.mpl-coord {
  margin-left: auto;
  margin-right: 29px;
  margin-top: -16px;
  display: flex;
  gap: 25px;
  font-size: 16.500px;
}
.plot {
  display: block;
  flex: none;
}
.plot-title {
  font-size: 19.500px;
}
.ylabel {
  font-size: 16px;
}
.ssup {
  font-size: 11px;
}
.tick-y, .tick-x {
  font-size: 16.500px;
}
.frame {
  fill: none;
  stroke: #000;
  stroke-width: 1.500;
}
.frame-tick {
  stroke: #000;
  stroke-width: 1.500;
}
.grid-line {
  stroke: #8a8a8a;
  stroke-width: 1;
  stroke-dasharray: 1 1;
  fill: none;
}
.curve {
  fill: none;
  stroke: #f00;
  stroke-width: 2;
}
.plot-band {
  height: 9px;
  flex: none;
  background: #eee;
  border-bottom: 1px solid #aaa;
}
.plot-gap {
  height: 52px;
  flex: none;
}
.plot-band2 {
  height: 9px;
  flex: none;
  background: #eee;
}
.plot-end {
  flex: 1;
  background: #fff;
  border-bottom: 1px solid #c4c4c4;
}
.wallpaper {
  flex: 1;
  background: linear-gradient(#f47b45 31%, #3f5063 31%);
}

/* GTKWave window */
.gtk {
  position: absolute;
  left: 93px;
  top: 1007px;
  width: 2349px;
  height: 523px;
  background: #dcdad5;
  font-size: 17px;
  display: flex;
  flex-direction: column;
  border-radius: 5px 5px 0 0;
  box-shadow: 0 5px 22px rgba(0, 0, 0, 0.4);
  border-bottom: 1px solid #b8b6b0;
}
.gtk-title {
  height: 30px;
  flex: none;
  background: #3e3d39;
  color: #8f8d87;
  border-radius: 5px 5px 0 0;
  text-align: center;
  line-height: 30px;
  font-family: "Noto Sans", sans-serif;
  font-weight: 700;
  font-size: 17.600px;
}
.gtk-menu {
  height: 31px;
  flex: none;
  display: flex;
  align-items: center;
  gap: 15px;
  padding: 2px 0 0 11px;
  font-size: 17.500px;
  border-top: 1px solid #f2f1ee;
  border-bottom: 1px solid #333;
}
.gtk-tools {
  height: 40px;
  flex: none;
  padding: 5px 0 0 2px;
  display: flex;
  align-items: center;
  border-top: 1px solid #f2f1ee;
  border-bottom: 1px solid #222;
}
.gi {
  width: 30px;
  flex: none;
}
.gsep {
  width: 1px;
  height: 24px;
  flex: none;
  margin: 0 6px;
  background: #b5b3ad;
  box-shadow: 1px 0 0 #f5f4f0;
}
.gsep-a {
  margin: 0 10px;
}
.gt-lbl {
  flex: none;
}
.from { width: 52px; }
.to { width: 26px; margin-left: 2px; }
.gt-inp {
  width: 89px;
  height: 22px;
  padding: 0 2px;
  font: 17px "DejaVu Sans", sans-serif;
  background: #fff;
  border: 1px solid #f4f4f2;
  border-top-color: #222;
  border-left-color: #222;
  outline: 0;
}
.gi-re { flex: none; }
.marker { width: 178px; margin-left: -3px; }
.gtk-panes {
  flex: 1;
  display: flex;
  min-height: 0;
}
.sst {
  width: 269px;
  flex: none;
  padding: 0 0 0 5px;
  display: flex;
  flex-direction: column;
}
.sst-head {
  height: 29px;
  flex: none;
  padding-left: 12px;
  line-height: 27px;
  position: relative;
}
.tri-down {
  position: absolute;
  left: 3px;
  top: 10px;
  border: 4px solid transparent;
  border-top: 5px solid #444;
  border-bottom: 0;
}
.tree-box {
  height: 105px;
  flex: none;
  background: #fff;
  border: 2px solid #a8a8a4;
  border-top-color: #111;
  border-left-color: #555;
  display: flex;
  align-items: flex-start;
  padding: 5px 0 0 4px;
  line-height: 20px;
}
.tree-exp {
  margin-right: -3px;
}
.tree-node {
  margin: 1px 1px 0 0;
}
.h-handle {
  height: 13px;
  flex: none;
  background: radial-gradient(circle, #444 0.8px, transparent 1px) center / 5px 5px repeat-x;
}
.list-box {
  height: 191px;
  flex: none;
  background: #fff;
  border: 1px solid #a0a09c;
}
.list-head {
  height: 31px;
  display: flex;
  background: #dcdad5;
  border-bottom: 2px solid #333;
  border-right: 1px solid #555;
  line-height: 30px;
  border-left: 1px solid #eee;
}
.lh-type {
  width: 51px;
  padding-left: 2px;
  border-right: 1px solid #777;
}
.lh-sig {
  padding-left: 3px;
}
.filter-row {
  height: 42px;
  flex: none;
  display: flex;
  align-items: center;
  margin-left: -2px;
  gap: 3px;
  padding-top: 1px;
}
.filter-inp {
  width: 157px;
  height: 28px;
  background: #fff;
  border: 1px solid #eee;
  border-top-color: #222;
  border-left-color: #222;
  outline: 0;
}
.btn-frame {
  height: 40px;
  flex: none;
  border: 1px solid #b5b3ad;
  display: flex;
  align-items: center;
  padding-left: 3px;
  gap: 7px;
}
.gbtn {
  height: 30px;
  padding: 2px 0 0;
  font: 17px "DejaVu Sans", sans-serif;
  background: #dcdad5;
  border: 1px solid #f4f4f2;
  border-right-color: #666;
  border-bottom: 2px solid #666;
}
.g-append { width: 77px; }
.g-insert { width: 72px; }
.g-replace { width: 92px; }
.v-handle {
  flex: none;
  width: 3px;
  height: 32px;
  align-self: flex-start;
  margin-top: 199px;
  background: repeating-linear-gradient(#444 0 2px, transparent 2px 5px);
}
.v-handle-a { margin-left: 5px; margin-right: 4px; }
.v-handle-b { margin-left: 5px; margin-right: 3px; }
.gframe {
  position: relative;
  margin-top: 14px;
  height: 408px;
  border: 1px solid #aeaca6;
  flex: none;
  padding: 10px 3px 0;
}
.gframe-lbl {
  position: absolute;
  top: -11px;
  left: 3px;
  padding: 0 1px;
  background: #dcdad5;
  line-height: 20px;
}
.signals {
  width: 432px;
}
.sig-list {
  height: 370px;
  background: #f4f4f4;
  font-family: "DejaVu Sans Mono", monospace;
  font-size: 25.200px;
}
.sig-time {
  height: 32px;
  line-height: 30px;
  background: #c9c9c9;
  padding: 4px 0 0 3px;
}
.sig-row {
  height: 33px;
  line-height: 28px;
  padding-top: 4px;
  border-bottom: 1px solid #fff;
  white-space: pre;
}
.sig-clk { padding-left: 170px; }
.sig-in { padding-left: 18px; }
.sig-out { padding-left: 4px; }
.sig-red {
  height: 32px;
  background: #c00;
}
.hscroll {
  display: flex;
  height: 15px;
  margin-top: 6px;
  background: #c2c1bc;
  border-top: 1px solid #8e8d88;
}
.hs-btn {
  width: 15px;
  flex: none;
  position: relative;
  background: #dcdad5;
  border: 1px solid #eee;
  border-right-color: #666;
  border-bottom-color: #666;
}
.hs-btn::after {
  content: "";
  position: absolute;
  top: 2px;
  border: 4px solid transparent;
}
.hs-l::after {
  left: 0;
  border-right: 5px solid #999;
  border-left: 0;
  margin-left: 4px;
}
.hs-r::after {
  left: 5px;
  border-left: 5px solid #999;
  border-right: 0;
}
.hs-dark.hs-l::after { border-right-color: #111; }
.hs-dark.hs-r::after { border-left-color: #111; }
.hs-thumb {
  background: #dcdad5;
  border: 1px solid #eee;
  border-right-color: #666;
  border-bottom-color: #666;
}
.hs-full {
  flex: 1;
}
.hs-lead {
  width: 291px;
  flex: none;
}
.hs-wave-thumb {
  width: 280px;
  flex: none;
}
.hs-tail {
  flex: 1;
}
.waves {
  width: 1621px;
}
.wave-row {
  display: flex;
  height: 370px;
}
.wave {
  display: block;
  flex: none;
  background: #000;
}
.hs-wave {
  width: 1595px;
}
.vscroll {
  width: 14px;
  flex: none;
  margin-left: 7px;
  height: 367px;
  border: 1px solid #8e8d88;
  border-top: 0;
  background: #dcdad5;
  display: flex;
  align-items: flex-end;
}
.vs-btn {
  width: 100%;
  height: 13px;
  border-top: 1px solid #888;
  position: relative;
}
.vs-btn::after {
  content: "";
  position: absolute;
  left: 2px;
  top: 4px;
  border: 4px solid transparent;
  border-top: 5px solid #999;
  border-bottom: 0;
}
.ruler-txt {
  fill: #fff;
  font-family: "DejaVu Sans Mono", monospace;
  font-size: 25.200px;
}
.clk-band {
  fill: #00c000;
}
.clk-edge {
  stroke: #00ff00;
  stroke-width: 1;
}
.nav-line {
  stroke: #22227a;
  stroke-width: 1;
  fill: none;
  shape-rendering: crispEdges;
}
.wave-line {
  stroke: #00f000;
  stroke-width: 1.100;
  fill: none;
}
.wave-fill {
  stroke: #00ff00;
  stroke-width: 1;
  shape-rendering: crispEdges;
}

/* terminal window */
.term {
  position: absolute;
  left: 1486px;
  top: 241px;
  width: 1001px;
  height: 925px;
  border-radius: 5px 5px 0 0;
  background: #300a24;
  box-shadow: 0 4px 24px rgba(0, 0, 0, 0.45);
  display: flex;
  flex-direction: column;
}
.term-title {
  position: relative;
  height: 31px;
  flex: none;
  background: linear-gradient(#5a564e, #4a4842);
  border-radius: 5px 5px 0 0;
  color: #e6e3dc;
  text-align: center;
  line-height: 31px;
  font-family: "Noto Sans", sans-serif;
  font-weight: 700;
  font-size: 17.600px;
}
.term-btns {
  position: absolute;
  right: 5px;
  top: 7px;
  display: flex;
  gap: 4px;
}
.term-btns i {
  width: 16px;
  height: 16px;
  border-radius: 50%;
  background: #6f6d67;
  color: #3e3d39;
  font-size: 12px;
  line-height: 16px;
  font-weight: 400;
  font-style: normal;
}
.term-btns .close {
  background: #e95420;
  color: #fff;
}
.term-menu {
  height: 28px;
  flex: none;
  background: #45433e;
  color: #e6e3dc;
  display: flex;
  align-items: center;
  gap: 13px;
  padding-left: 7px;
  font-family: "Noto Sans", sans-serif;
  font-size: 17.800px;
}
.term-body {
  flex: 1;
  min-height: 0;
  margin: 1px 12px 1px 1px;
  background: #262626;
  font-family: "DejaVu Sans Mono", monospace;
  font-size: 21.600px;
  line-height: 27px;
  color: #ffd7af;
  display: flex;
  flex-direction: column;
}
.vim {
  flex: 1;
  min-height: 0;
  overflow: hidden;
  padding-top: 1px;
}
.ln {
  height: 27px;
  white-space: pre;
}
.nr { color: #6c6c6c; }
.kw { color: #87afaf; }
.red { color: #d75f5f; }
.deco { color: #afaf00; font-weight: 700; }
.fn { color: #87af87; }
.num { color: #d787af; }
.str { color: #afaf00; }
.cmt { color: #808080; }
.bi { color: #ff8700; }
.cur {
  background: #87afaf;
  color: #262626;
}
.status {
  height: 27px;
  flex: none;
  background: #303030;
  color: #e8e8e8;
  white-space: pre;
}
.st-u { background: #ff6600; color: #fff; }
.st-win { background: #f0f0f0; color: #222; }
.st-err { background: #cc0000; color: #fff; font-weight: 700; }
.st-up { background: #d3d7cf; color: #3465a4; }
.st-load { background: #fce94f; color: #333; }
.st-cpu { background: #06989a; color: #eee; }
.st-mem { background: #4e9a06; color: #eee; }
.st-disk { background: #ad7fa8; color: #eee; }
.term-scroll {
  position: absolute;
  right: 0;
  top: 59px;
  bottom: 0;
  width: 12px;
  background: #300a24;
}
.term-scroll i {
  position: absolute;
  right: 0;
  top: 118px;
  bottom: 1px;
  width: 5px;
  background: #c8613f;
}
```

FILE: script.js
```js
const NS = 'http://www.w3.org/2000/svg';

// seeded noise so the waves stay the same on every load
let seed = 12345;
const rnd = () => {
  seed = (seed * 1664525 + 1013904223) % 4294967296;
  return seed / 4294967296;
};

const addEl = (parent, tag, attrs, text) => {
  const el = document.createElementNS(NS, tag);
  Object.keys(attrs).forEach((k) => el.setAttribute(k, attrs[k]));
  if (text) el.textContent = text;
  parent.appendChild(el);
  return el;
};

// interpolate between key points with cardinal tangents
const hermite = (pts, x) => {
  let i = 0;
  while (i < pts.length - 2 && pts[i + 1][0] < x) i++;
  const [x0, y0] = pts[i];
  const [x1, y1] = pts[i + 1];
  const prev = pts[Math.max(i - 1, 0)];
  const next = pts[Math.min(i + 2, pts.length - 1)];
  const h = x1 - x0;
  const m0 = (y1 - prev[1]) / (x1 - prev[0]);
  const m1 = (next[1] - y0) / (next[0] - x0);
  const t = (x - x0) / h;
  const t2 = t * t;
  const t3 = t2 * t;
  return (2 * t3 - 3 * t2 + 1) * y0 + (t3 - 2 * t2 + t) * h * m0 + (-2 * t3 + 3 * t2) * y1 + (t3 - t2) * h * m1;
};

// magnitude plot: 377.2 px per 0.1 in f, 12.82 px per dB
const X0 = 651;
const Y0 = 208;
const fx = (f) => X0 + f * 3772;
const dby = (db) => Y0 - db * 12.82;

const drawPlot = () => {
  const grid = document.getElementById('gridlines');
  const plot = grid.parentNode;
  [0, -10, -20, -30, -40, -50, -60, -70, -80].forEach((db) => {
    const y = dby(db);
    addEl(grid, 'path', { class: 'grid-line', d: `M651 ${y}H2537` });
    addEl(grid, 'path', { class: 'frame-tick', d: `M645 ${y}H651` });
    const label = db === 0 ? '0' : '−' + (-db);
    addEl(plot, 'text', { class: 'tick-y', x: 641, y: y + 6, 'text-anchor': 'end' }, label);
  });
  [0.1, 0.2, 0.3, 0.4].forEach((f) => {
    addEl(grid, 'path', { class: 'grid-line', d: `M${fx(f)} 183V1232` });
  });

  // signed amplitude, read off the reference
  const amp = [
    [0, 0.0186], [0.01, 0.0225], [0.02, 0.0295], [0.03, 0.0391], [0.04, 0.0487], [0.05, 0.0549], [0.0567, 0.0562],
    [0.065, 0.0515], [0.075, 0.0347], [0.082, 0.0175], [0.0884, 0], [0.0952, -0.0316], [0.1069, -0.1],
    [0.1199, -0.2], [0.1318, -0.316], [0.1535, -0.54], [0.1763, -0.76], [0.1927, -0.91], [0.2, -0.965],
    [0.2057, -0.995], [0.2187, -1.04], [0.238, -1.058], [0.28, -1], [0.318, -0.947], [0.356, -1], [0.403, -1.058],
    [0.4536, -1], [0.5, -0.947],
  ];
  let d = '';
  for (let f = 0; f <= 0.5; f += 0.0002) {
    const db = 20 * Math.log10(Math.max(Math.abs(hermite(amp, f)), 1e-5));
    d += `${d ? 'L' : 'M'}${fx(f).toFixed(1)} ${Math.min(dby(db), 1231).toFixed(1)}`;
  }
  document.getElementById('curve').setAttribute('d', d);
};

// waves
const PERIOD = 64.6;
const DIP0 = 888;
const shape = [
  [0, 1322], [0.05, 1295], [0.1, 1240], [0.16, 1212], [0.21, 1245], [0.27, 1292], [0.3, 1288],
  [0.36, 1245], [0.47, 1218], [0.55, 1252], [0.66, 1282], [0.78, 1262], [0.85, 1272], [0.93, 1292], [1, 1322],
];

const drawWaves = () => {
  const grid = document.getElementById('wave-grid');
  let nav = '';
  [1157.5, 1197.5, 1329.5, 1461.5, 1494.5].forEach((y) => { nav += `M821 ${y}H2416`; });
  for (let k = 0; k < 6; k++) {
    const x = Math.round(1035 + k * 232.4) + 0.5;
    nav += `M${x} 1157V1165M${x} 1197V1503`;
  }
  for (let x = 1035 - 9 * 23.24; x < 2416; x += 23.24) {
    nav += `M${Math.round(x) + 0.5} 1157V1163`;
  }
  addEl(grid, 'path', { class: 'nav-line', d: nav });

  let dIn = '';
  const mid = 1265;
  let scale = 1;
  let lastK = -99;
  let cur = shape;
  for (let x = 821; x <= 2416; x += 1.5) {
    const p = (x - DIP0) / PERIOD;
    const k = Math.floor(p);
    if (k !== lastK) {
      scale = (x < 950 ? 0.72 : x < 1100 ? 0.9 : 1) * (0.97 + rnd() * 0.08);
      // every pitch period differs a little; ends stay put so the line joins up
      cur = shape.map(([t, y], i) => (i === 0 || i === shape.length - 1 ? [t, y] : [t, y + (rnd() - 0.5) * 16]));
      lastK = k;
    }
    const y = mid + (hermite(cur, p - k) - mid) * scale + (rnd() - 0.5) * 6;
    dIn += `${dIn ? 'L' : 'M'}${x} ${y.toFixed(1)}`;
  }
  document.getElementById('wave-in').setAttribute('d', dIn);

  const heights = [30, 42, 46, 31, 41, 42, 45, 49, 52, 65, 53, 40, 46, 38, 50, 44, 36, 48, 43, 30, 39, 35, 41, 45, 38];
  let dOut = '';
  for (let x = 821; x < 2416; x++) {
    const p = (x - DIP0 - 10) / PERIOD;
    const k = Math.floor(p);
    const dist = (p - k) * PERIOD;
    const A = heights[(k + 25) % 25];
    let env = 7 + A * Math.exp(-dist / 3.5);
    env += 18 * Math.exp(-dist / 10);
    if (dist > 26 && dist < 52) env += 12 * Math.exp(-(dist - 28) / 7);
    if (PERIOD - dist < 8) env += 8;
    const up = env * (0.4 + rnd() * 0.6);
    const down = env * (0.4 + rnd() * 0.6);
    dOut += `M${x + 0.5} ${(1398 - up).toFixed(0)}V${(1398 + down).toFixed(0)}`;
  }
  document.getElementById('wave-out').setAttribute('d', dOut);
};

drawPlot();
drawWaves();
```
